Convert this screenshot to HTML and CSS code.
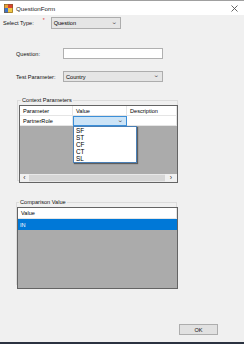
FILE: index.html
```html
<!DOCTYPE html>
<html lang="en">
<head>
    <meta charset="UTF-8">
    <title>QuestionForm</title>
    <link rel="stylesheet" href="styles.css">
</head>
<body>
    <!-- Barra de titulo -->
    <div class="titlebar">
        <svg class="app-icon" width="9" height="9" viewBox="0 0 9 9">
            <rect x="0" y="0" width="4" height="4" fill="#e8a33a"/>
            <rect x="4" y="0" width="5" height="4" fill="#d9412f"/>
            <rect x="0" y="4" width="4" height="5" fill="#3f74c9"/>
            <rect x="4" y="4" width="5" height="5" fill="#f2c744"/>
            <rect x="0.5" y="0.5" width="8" height="8" fill="none" stroke="#7a5a2a" stroke-width="0.6"/>
        </svg>
        <span class="title">QuestionForm</span>
        <svg class="close" width="7" height="7" viewBox="0 0 7 7">
            <path d="M0.5 0.5 L6.5 6.5 M6.5 0.5 L0.5 6.5" stroke="#555" stroke-width="0.9"/>
        </svg>
    </div>

    <div class="form">
        <div class="type-row">
            <span class="label">Select Type:</span>
            <span class="required">*</span>
            <div class="combo type-combo">
                <span>Question</span>
                <span class="chevron">&#8964;</span>
            </div>
        </div>

        <div class="field-row question-row">
            <span class="label">Question:</span>
            <div class="textbox"></div>
        </div>

        <div class="field-row param-row">
            <span class="label">Test Parameter:</span>
            <div class="combo wide-combo">
                <span>Country</span>
                <span class="chevron">&#8964;</span>
            </div>
        </div>

        <fieldset class="group ctx-group">
            <legend>Context Parameters</legend>
            <div class="grid ctx-grid">
                <div class="grid-head">
                    <div class="cell">Parameter</div>
                    <div class="cell">Value</div>
                    <div class="cell">Description</div>
                </div>
                <div class="grid-row">
                    <div class="cell">PartnerRole</div>
                    <div class="cell edit-cell"><span class="chevron">&#8964;</span></div>
                    <div class="cell"></div>
                </div>
                <div class="grid-empty"></div>
                <div class="hscroll">
                    <span class="arrow">&lsaquo;</span>
                    <span class="thumb"></span>
                    <span class="arrow right">&rsaquo;</span>
                </div>

                <!-- Lista desplegable abierta -->
                <ul class="dropdown">
                    <li>SF</li>
                    <li>ST</li>
                    <li>CF</li>
                    <li>CT</li>
                    <li>SL</li>
                </ul>
            </div>
        </fieldset>

        <fieldset class="group cmp-group">
            <legend>Comparison Value</legend>
            <div class="grid cmp-grid">
                <div class="grid-head single">
                    <div class="cell">Value</div>
                </div>
                <div class="grid-row single selected">
                    <div class="cell">IN</div>
                </div>
                <div class="grid-empty"></div>
            </div>
        </fieldset>

        <div class="footer">
            <button type="button" class="ok">OK</button>
        </div>
    </div>

    <div class="taskbar"></div>
</body>
</html>
```

FILE: styles.css
```css
body {
    margin: 0;
    width: 244px;
    height: 344px;
    overflow: hidden;
    background-color: #f0f0f0;
    font-family: "Liberation Sans", Arial, sans-serif;
    font-size: 5.6px;
    color: #000;
    position: relative;
}
.titlebar {
    height: 14px;
    border-top: 1px solid #a0a0a0;
    background: #ffffff;
    display: flex;
    align-items: center;
}
.app-icon {
    margin-left: 4px;
}
.title {
    margin-left: 3px;
    font-size: 6.2px;
    color: #222;
}
.close {
    margin-left: auto;
    margin-right: 6px;
}
.form {
    padding-top: 2px;
}
.label {
    color: #111;
}
.type-row {
    display: flex;
    align-items: center;
    height: 12px;
    padding-left: 3px;
}
.required {
    color: #e03030;
    align-self: flex-start;
    margin-left: 9px;
    font-size: 5px;
    line-height: 5px;
    margin-top: 1px;
}
.combo {
    box-sizing: border-box;
    display: flex;
    align-items: center;
    justify-content: space-between;
    background: #e5e5e5;
    border: 1px solid #adadad;
    padding: 0 3px 0 2px;
}
.type-combo {
    width: 70px;
    height: 12px;
    margin-left: 6px;
}
.chevron {
    font-size: 6px;
    line-height: 6px;
    color: #555;
    transform: scaleX(1.3);
    margin-top: -3px;
}
.field-row {
    display: flex;
    align-items: center;
    padding-left: 16px;
    height: 11px;
}
.field-row .label {
    width: 47px;
}
.question-row {
    margin-top: 19px;
}
.param-row {
    margin-top: 12px;
}
.textbox {
    box-sizing: border-box;
    width: 100px;
    height: 11px;
    background: #ffffff;
    border: 1px solid #b0b0b0;
}
.wide-combo {
    width: 100px;
    height: 11px;
}
.group {
    border: 1px solid #dcdcdc;
    margin: 0;
    padding: 0;
    min-width: 0;
}
.group legend {
    padding: 0 1px;
    margin-left: 2px;
    line-height: 7px;
    color: #111;
}
.ctx-group {
    margin: 15px 0 0 17px;
    width: 158px;
    height: 82px;
    padding: 0 0 0 1px;
}
.cmp-group {
    margin: 18px 0 0 16px;
    width: 159px;
    height: 84px;
}
.grid {
    position: relative;
    box-sizing: border-box;
    border: 1px solid #646464;
    background: #ababab;
    display: flex;
    flex-direction: column;
}
.ctx-grid {
    margin-top: 1px;
    width: 159px;
    height: 78px;
}
.cmp-grid {
    margin-top: 1px;
    width: 161px;
    height: 82px;
}
.grid-head,
.grid-row {
    display: grid;
    grid-template-columns: 53px 54px 1fr;
    background: #ffffff;
    height: 10px;
}
.grid-head.single,
.grid-row.single {
    grid-template-columns: 1fr;
    height: 11px;
}
.grid-head .cell,
.grid-row .cell {
    border-right: 1px solid #e5e5e5;
    border-bottom: 1px solid #e5e5e5;
}
.cell {
    box-sizing: border-box;
    padding-left: 3px;
    display: flex;
    align-items: center;
    white-space: nowrap;
    overflow: hidden;
}
.edit-cell {
    background: #cce4f7;
    border: 1px solid #3c8fd8 !important;
    justify-content: flex-end;
    padding-right: 3px;
}
.selected {
    background: #0078d7;
    color: #ffffff;
}
.selected .cell {
    border: none;
    padding-left: 2px;
}
.grid-empty {
    flex: 1;
}
.hscroll {
    height: 8px;
    display: flex;
    align-items: center;
    background: #e8e8e8;
}
.hscroll .arrow {
    width: 9px;
    text-align: center;
    font-size: 7px;
    line-height: 8px;
    color: #333;
    background: #f0f0f0;
}
.hscroll .arrow.right {
    width: 12px;
}
.thumb {
    flex: 1;
    height: 6px;
    background: #d6d6d6;
}
.dropdown {
    position: absolute;
    left: 53px;
    top: 20px;
    width: 64px;
    height: 37px;
    box-sizing: border-box;
    margin: 0;
    padding: 0 0 0 2px;
    list-style: none;
    background: #ffffff;
    border: 1px solid #4a7fb5;
    box-shadow: 1px 1px 1px rgba(0, 0, 0, 0.45);
}
.dropdown li {
    height: 7px;
    line-height: 7px;
    font-size: 6.4px;
}
.footer {
    display: flex;
    justify-content: flex-end;
    padding-right: 26px;
    margin-top: 39px;
}
.ok {
    box-sizing: border-box;
    width: 39px;
    height: 11px;
    padding: 0;
    background: #e1e1e1;
    border: 1px solid #adadad;
    font-family: "Liberation Sans", Arial, sans-serif;
    font-size: 5.6px;
    color: #111;
}
.taskbar {
    position: absolute;
    left: 0;
    bottom: 0;
    width: 244px;
    height: 2px;
    background: #2b3240;
}
```
